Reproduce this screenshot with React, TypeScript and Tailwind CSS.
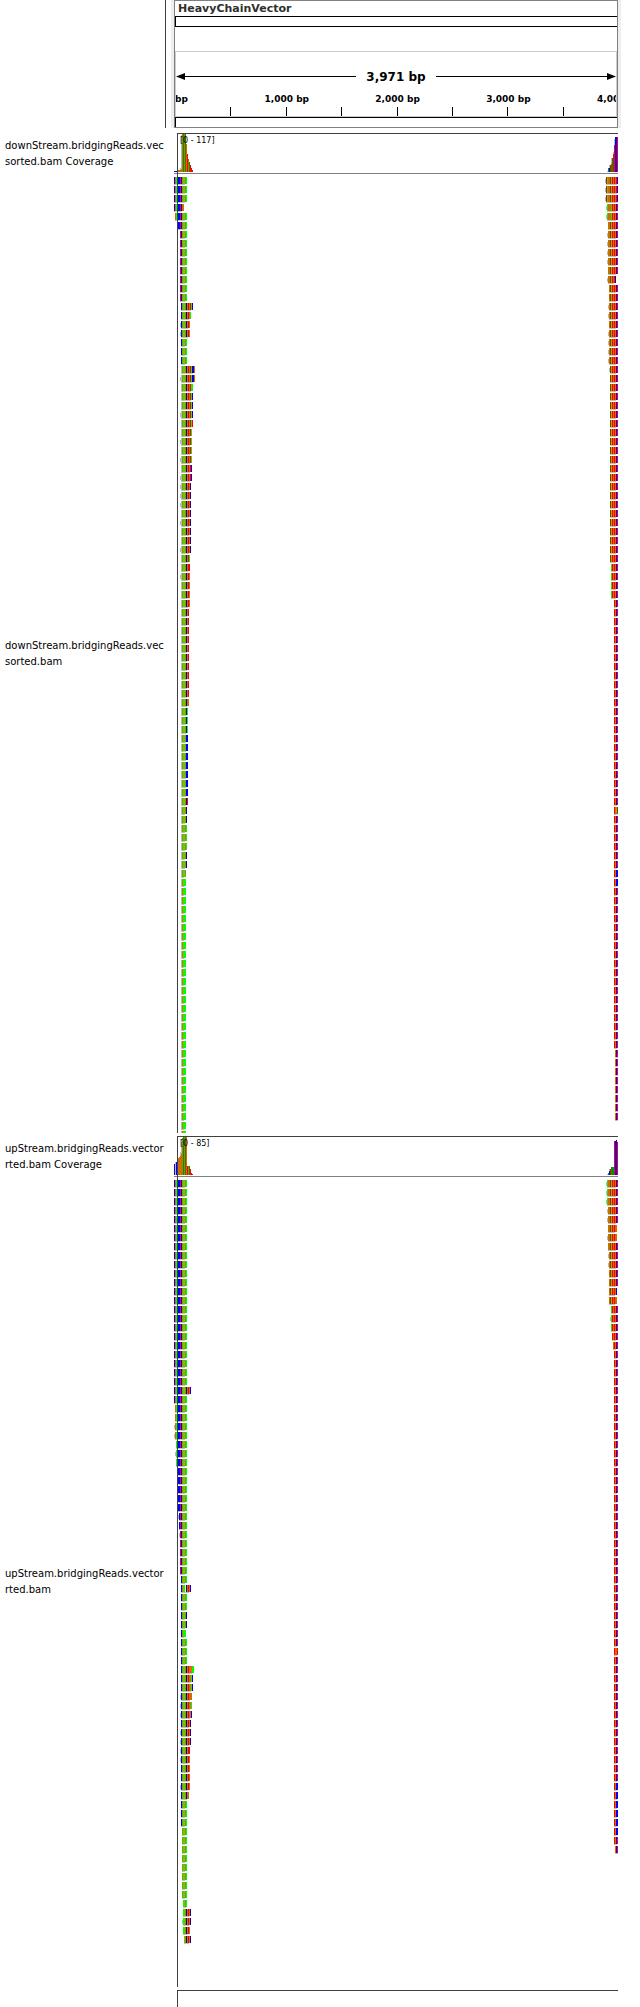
import React from "react";

type Read = { start: number; bases: string; lead?: boolean };
type Bar = [x: number, height: number, color: string];

const COLORS: Record<string, string> = {
  b: "#0000ff",
  g: "#00ff00",
  r: "#ff0000",
  o: "#c87000",
  m: "#e06818",
  x: "#b8b8b8",
  n: "#1400a0",
  d: "#009600",
  l: "#38dc10",
};

const ROW = 9;

// "count*start:bases", a "+" after the start marks a clipped leading base
function parse(spec: string): Read[] {
  return spec
    .trim()
    .split(/\s+/)
    .flatMap((item) => {
      const [, count, start, lead, bases] = item.match(/^(\d+)\*(\d+)(\+?):(\S+)$/)!;
      return Array.from({ length: Number(count) }, () => ({
        start: Number(start),
        bases,
        lead: lead === "+",
      }));
    });
}

const downLeft = parse(`
3*0:bogbbbrbmggmg 1*0:bogbbbrboo 1*1:ogbbbrbmggmg 1*4+:bbrbmggmg 8*6:rbmggmg
1*7:bmggmnororgb 1*7:bmggmnorog 2*7+:bmggmnoro 3*7:bmggmg
1*7:xmggmnororgnbo 1*7+:xmggmnororgnbo 1*7:xmggmnororgg 2*7:xmggmnororgb 1*7+:xmggmnororgb
1*7:xmggmnororgr 1*7:xmggmnororg 1*7+:xmggmnororg 1*7:xmggmnororg 1*7+:xmggmnororg
1*7:xmggmnororb 1*7+:xmggmnororb 3*7+:xmggmnoron 1*7:xmggmnoron 1*7+:xmggmnoron
2*7:xmggmnoron 1*7+:xmggmnoron 1*7:xmggmnorg 1*7:xmggmnorr 1*7+:xmggmnoro 3*7:xmggmnoro
10*7:xmggmnor 1*7:xmggmnoo 3*7:xmggmng 7*7:xmggmbb 1*7:xmggmnr 2*7:xmggmn
3*7:xmggml 2*7:xmggmn 1*7:xmggm 29*7:xmggg`);

const downRight = parse(`
3*12+:rloorlrororbr 2*13+:looolrorobr 1*14:oorlrorobr 4*14+:oorlrorobr 1*14:oorlrorobr
1*14+:oorlrorn 2*15:orlrorobr 2*15+:orlrorobr 1*15:orlrorobr 4*15+:orlrorobr
1*16+:rlrorobr 21*16:rlrorobr 4*17:lrorobr 23*20:robr 1*20:rmgr 6*20:robr 2*20:robb
18*20:robr 8*21:obr`);

const upLeft = parse(`
23*0:bogbbbrbmggmg 1*0:bogbbbrbmggmnorob 1*0:bogbbbrbmggmg 2*1:ogbbbrbmggmg
2*1+:ogbbbrbmggmg 1*2:gbbbrbmggmg 1*2+:gbbbrbmggmg 1*2:gbbbrbmggmg 5*4+:bbrbmggmg
1*5+:brbmggmg 1*5:brbmggmg 1*6+:rbmggmg 4*6:rbmggmg 1*7:bmggmg 1*7:bmgg.norob
2*7:bmggmg 2*7:bmggmn 1*7:bmggg 3*7:bmggmg 1*7:bmggmnorommgg 2*7:bmggmnoromgb
1*7+:bmggmnorooo 1*7+:bmggmnoromg 1*7+:bmggmnoromb 1*7:bmggmnoron 2*7+:bmggmnoron
1*7+:bmggmnorr 1*7+:bmggmnoro 2*7:bmggmnoro 1*7+:bmggmnoro 1*7:bmggmnoo 3*7:bmggmg
8*8:mggmg 1*9:ggmg 1*9:ggmnoron 1*9+:ggmnoron 1*9:ggmnoro 1*10:gmnoron`);

const upRight = parse(`
3*13+:loorlrorobr 2*14+:oorlrorobr 1*14:oorlroroo 1*14+:oorlroroo 1*14:oorlrorobr
2*15+:orlrorobr 2*15:orlrorobr 1*15:orlrorob 1*15:orlroroo 1*17:lrorobr 1*17+:lrorobr
1*17:lrorobr 1*18:rorobr 1*19:orobr 33*20:robr 1*20:rmor 14*20:robr 6*20:robb 1*20:robr 1*21:obr`);

const downCoverLeft: Bar[] = [
  [0, 1, "b"], [1, 1, "b"], [2, 1, "b"], [4, 2, "o"], [5, 2, "o"], [6, 4, "x"], [6, 2, "o"],
  [7, 37, "x"], [7, 3, "o"], [8, 38, "o"], [9, 38, "d"], [10, 38, "o"], [11, 38, "d"],
  [12, 28, "o"], [13, 18, "r"], [14, 13, "o"], [15, 10, "d"], [16, 7, "r"], [17, 4, "r"], [18, 2, "r"],
];
const downCoverRight: Bar[] = [
  [13, 1, "x"], [14, 4, "d"], [15, 7, "x"], [15, 4, "b"], [16, 7, "r"], [17, 14, "x"], [17, 8, "d"],
  [18, 14, "d"], [19, 20, "x"], [19, 18, "r"], [20, 33, "x"], [20, 27, "r"], [21, 35, "b"],
  [22, 35, "b"], [23, 35, "r"],
];
const upCoverLeft: Bar[] = [
  [0, 11, "b"], [1, 13, "x"], [2, 13, "b"], [3, 14, "x"], [4, 17, "o"], [5, 18, "o"], [6, 23, "x"],
  [6, 19, "o"], [7, 33, "x"], [7, 21, "o"], [8, 37, "o"], [9, 38, "d"], [10, 38, "o"], [11, 38, "d"],
  [12, 38, "o"], [13, 9, "r"], [14, 9, "o"], [15, 9, "d"], [16, 6, "r"], [17, 2, "r"], [18, 1, "r"],
];
const upCoverRight: Bar[] = [
  [13, 1, "x"], [14, 2, "d"], [15, 6, "x"], [15, 4, "b"], [16, 6, "r"], [17, 8, "d"], [18, 8, "d"],
  [19, 8, "d"], [20, 34, "r"], [21, 34, "b"], [22, 35, "b"], [23, 33, "r"],
];

function Reads({ reads, height }: { reads: Read[]; height: number }) {
  return (
    <svg width="24" height={height} shapeRendering="crispEdges" aria-hidden="true" className="shrink-0">
      {reads.map((read, i) => {
        const y = 3 + i * ROW;
        return (
          <g key={i}>
            {read.lead && <rect x={read.start - 1} y={y + 2} width={1} height={4} fill={COLORS.x} />}
            <rect x={read.start} y={y + 7} width={Math.max(3, read.bases.length - 2)} height={1} fill="#c0c0c0" />
            {read.bases.split("").map(
              (base, k) =>
                COLORS[base] && (
                  <rect key={k} x={read.start + k} y={y} width={1} height={7} fill={COLORS[base]} />
                ),
            )}
          </g>
        );
      })}
    </svg>
  );
}

function Bars({ bars }: { bars: Bar[] }) {
  return (
    <svg width="24" height="39" shapeRendering="crispEdges" aria-hidden="true" className="shrink-0">
      {bars.map(([x, h, color], i) => (
        <rect key={i} x={x} y={38 - h} width={1} height={h} fill={COLORS[color]} />
      ))}
    </svg>
  );
}

function Name({ lines }: { lines: string[] }) {
  return (
    <div className="flex w-[174px] shrink-0 items-center pl-[5px] text-[10px] leading-4 whitespace-nowrap">
      <div>
        {lines.map((line) => (
          <div key={line}>{line}</div>
        ))}
      </div>
    </div>
  );
}

type TrackProps = {
  file: string[];
  coverage: string[];
  range: string;
  coverLeft: Bar[];
  coverRight: Bar[];
  left: Read[];
  right: Read[];
  height: number;
};

function Track(props: TrackProps) {
  return (
    <section className="relative">
      <div className="flex">
        <Name lines={props.coverage} />
        <div className="relative mr-[22px] flex flex-1 justify-between border-b border-[#808080] pt-px">
          <div className="absolute top-0 right-0 left-[3px] h-px bg-[#404040]" />
          <Bars bars={props.coverLeft} />
          <span className="absolute top-[3px] left-[6px] text-[8px] leading-[10px]">{props.range}</span>
          <Bars bars={props.coverRight} />
        </div>
      </div>
      <div className="flex">
        <Name lines={props.file} />
        <div className="mr-[22px] flex flex-1 justify-between">
          <Reads reads={props.left} height={props.height} />
          <Reads reads={props.right} height={props.height} />
        </div>
      </div>
      <div className="absolute top-0 bottom-0 left-[177px] w-px bg-[#404040]" />
    </section>
  );
}

const BASES = 3971;
const at = (bp: number) => `${(bp / BASES) * 100}%`;

function Ruler() {
  return (
    <div className="border border-[#cccccc]">
      <div className="flex h-[49px] items-center">
        <svg width="9" height="7" aria-hidden="true" className="shrink-0">
          <path d="M0 3.5 9 0V7Z" />
        </svg>
        <div className="h-px flex-1 bg-black" />
        <span className="px-[10px] text-[12px] leading-4 font-bold">3,971 bp</span>
        <div className="h-px flex-1 bg-black" />
        <svg width="9" height="7" aria-hidden="true" className="shrink-0">
          <path d="M9 3.5 0 0V7Z" />
        </svg>
      </div>
      <svg width="100%" height="26" className="-mt-[11px] block text-[9px] font-bold" textAnchor="middle">
        <text x="-1" y="12" textAnchor="start">bp</text>
        {[1000, 2000, 3000, 4000].map((bp) => (
          <text key={bp} x={at(bp)} y="12">
            {bp.toLocaleString("en-US")} bp
          </text>
        ))}
        <g transform="translate(-1 0)">
          {[500, 1000, 1500, 2000, 2500, 3000, 3500].map((bp) => (
            <rect key={bp} x={at(bp)} y="17" width="1" height="9" shapeRendering="crispEdges" />
          ))}
        </g>
      </svg>
    </div>
  );
}

export default function App() {
  return (
    <main className="bg-white font-['DejaVu_Sans',sans-serif] text-black">
      <header className="flex">
        <div className="w-[166px] shrink-0 border-r border-[#404040]" />
        <div className="mr-[19px] ml-[5px] min-w-0 flex-1 border-x-3 border-[#eeeeee]">
          <div className="border border-[#808080]">
            <h1 className="h-[15px] pl-[3px] text-[11px] leading-[15px] font-bold text-[#303030]">HeavyChainVector</h1>
            <div className="h-[11px] border border-r-0 border-black" />
            <div className="h-[24px]" />
            <Ruler />
            <div className="h-[10px] border-t border-l border-black" />
          </div>
        </div>
      </header>
      <div className="h-[5px]" />
      <Track
        coverage={["downStream.bridgingReads.vec", "sorted.bam Coverage"]}
        file={["downStream.bridgingReads.vec", "sorted.bam"]}
        range="[0 - 117]"
        coverLeft={downCoverLeft}
        coverRight={downCoverRight}
        left={downLeft}
        right={downRight}
        height={959}
      />
      <div className="h-[3px]" />
      <Track
        coverage={["upStream.bridgingReads.vector", "rted.bam Coverage"]}
        file={["upStream.bridgingReads.vector", "rted.bam"]}
        range="[0 - 85]"
        coverLeft={upCoverLeft}
        coverRight={upCoverRight}
        left={upLeft}
        right={upRight}
        height={810}
      />
      <div className="h-[3px]" />
      <div className="mr-[22px] ml-[177px] h-[17px] border-t border-l border-[#404040]" />
    </main>
  );
}
